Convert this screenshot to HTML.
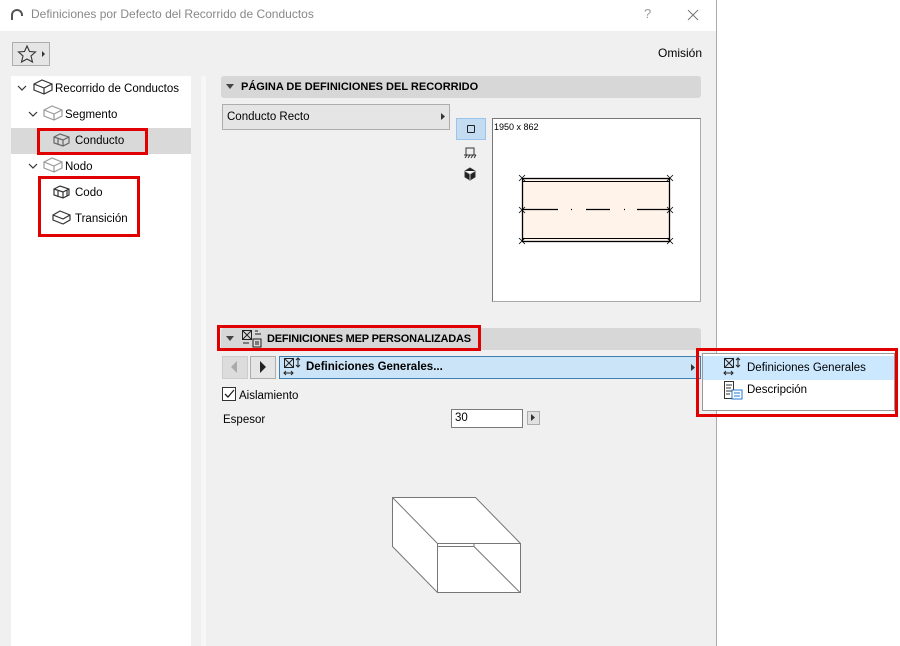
<!DOCTYPE html>
<html><head><meta charset="utf-8"><style>
*{box-sizing:border-box;margin:0;padding:0}
body{width:900px;height:646px;background:#fff;font-family:"Liberation Sans",sans-serif;font-size:11.5px;line-height:15px;color:#000;position:relative;overflow:hidden}
.a{position:absolute}
.red{position:absolute;border:3px solid #e00000}
</style></head><body>
<div class="a" style="left:0;top:0;width:717px;height:646px;background:#f0f0f0;border-right:1px solid #aaa"></div>
<div class="a" style="left:0;top:0;width:716px;height:31px;background:#fff"></div>
<svg class="a" style="left:10px;top:9px" width="14" height="12"><path d="M2 11 V6 A5 5 0 0 1 12 6 V7" fill="none" stroke="#555" stroke-width="2"/></svg>
<div class="a" style="left:31px;top:7px;color:#888;font-size:12px">Definiciones por Defecto del Recorrido de Conductos</div>
<div class="a" style="left:644px;top:6px;color:#999;font-size:13px">?</div>
<svg class="a" style="left:687px;top:9px" width="12" height="12"><path d="M1 1L11 11M11 1L1 11" stroke="#777" stroke-width="1"/></svg>
<div class="a" style="left:12px;top:42px;width:38px;height:24px;border:1px solid #adadad;background:#e5e5e5"></div>
<svg class="a" style="left:17px;top:44px" width="30" height="20"><path d="M10 2 L12.5 7.5 L18.5 8 L14 12 L15.5 18 L10 15 L4.5 18 L6 12 L1.5 8 L7.5 7.5Z" fill="none" stroke="#333" stroke-width="1.1"/><path d="M25 7 L28 10 L25 13Z" fill="#333"/></svg>
<div class="a" style="left:658px;top:46px;font-size:12px">Omisión</div>
<div class="a" style="left:11px;top:76px;width:180px;height:570px;background:#fff"></div>
<div class="a" style="left:11px;top:128px;width:180px;height:26px;background:#d9d9d9"></div>
<div class="a" style="left:201px;top:76px;width:5px;height:570px;background:#f7f7f7"></div>
<svg class="a" style="left:11px;top:76px" width="180" height="170" fill="none" stroke-width="1.2">
<path d="M7 10l4 4 4-4" stroke="#333"/>
<path d="M23 8l8-4 10 4v6l-8 4-10-4z M23 8l10 4 8-4 M33 12v6" stroke="#333"/>
<path d="M18 36l4 4 4-4" stroke="#333"/>
<path d="M33 34l8-4 10 4v6l-8 4-10-4z M33 34l10 4 8-4 M43 38v6" stroke="#999"/>
<path d="M43 61l6-3 9 3v6l-6 3-9-3z M43 61l9 3 6-3 M52 64v6 M47 63v5" stroke="#666"/>
<path d="M18 88l4 4 4-4" stroke="#333"/>
<path d="M33 86l8-4 10 4v6l-8 4-10-4z M33 86l10 4 8-4 M43 90v6" stroke="#999"/>
<path d="M43 113l6-3 9 3v6l-6 3-9-3z M43 113l9 3 6-3 M47 115v6 M52 116v6 M56 114v6" stroke="#333"/>
<path d="M42 139l7-4 10 4v5l-7 4-10-4z M42 139l10 4 7-4" stroke="#333"/>
</svg>
<div class="a" style="left:55px;top:82px">Recorrido de Conductos</div>
<div class="a" style="left:65px;top:108px">Segmento</div>
<div class="a" style="left:75px;top:134px">Conducto</div>
<div class="a" style="left:65px;top:160px">Nodo</div>
<div class="a" style="left:75px;top:186px">Codo</div>
<div class="a" style="left:75px;top:212px">Transición</div>
<div class="red" style="left:37px;top:128px;width:111px;height:27px"></div>
<div class="red" style="left:38px;top:176px;width:102px;height:61px"></div>
<div class="a" style="left:221px;top:76px;width:480px;height:22px;background:#d7d7d7;border-radius:3px"></div>
<svg class="a" style="left:226px;top:84px" width="8" height="6"><path d="M0 0h8l-4 5z" fill="#444"/></svg>
<div class="a" style="left:241px;top:80px;font-weight:bold;font-size:11px">PÁGINA DE DEFINICIONES DEL RECORRIDO</div>
<div class="a" style="left:222px;top:104px;width:228px;height:26px;border:1px solid #adadad;background:#e5e5e5"></div>
<div class="a" style="left:227px;top:110px">Conducto Recto</div>
<svg class="a" style="left:441px;top:113px" width="5" height="7"><path d="M0 0l4 3.5-4 3.5z" fill="#333"/></svg>
<div class="a" style="left:456px;top:118px;width:30px;height:22px;background:#c3dcf2;border:1px solid #9cc4ea"></div>
<div class="a" style="left:467px;top:125px;width:8px;height:8px;border:1.2px solid #222;border-radius:1px"></div>
<svg class="a" style="left:463px;top:145px" width="14" height="40" fill="none" stroke="#333"><path d="M3 10V3h8v7 M1 10h12 M2 13l2-3 M5 13l2-3 M8 13l2-3 M11 13l2-3"/><path d="M7 23l5 3v6l-5 3-5-3v-6z" fill="#222"/><path d="M2 26l5 3 5-3 M7 29v6" stroke="#ccc" fill="#fff"/></svg>
<div class="a" style="left:492px;top:118px;width:209px;height:184px;background:#fff;border:1px solid #aaa;border-top-color:#777;border-left-color:#777"></div>
<div class="a" style="left:494px;top:120px;font-size:9px">1950 x 862</div>
<svg class="a" style="left:515px;top:172px" width="165" height="77" fill="none" stroke="#000">
<rect x="7.5" y="6.5" width="147" height="63" fill="#fff3ea" stroke-width="1.3"/>
<path d="M7 9.5h148 M7 66.5h148" stroke-width="1"/>
<path d="M8 37.5h35 M56 37.5h1 M71 37.5h24 M109 37.5h1 M122 37.5h33" stroke-width="1.2"/>
<path d="M4 3l6 6M10 3l-6 6 M152 3l6 6M158 3l-6 6 M4 35l6 6M10 35l-6 6 M152 35l6 6M158 35l-6 6 M4 66l6 6M10 66l-6 6 M152 66l6 6M158 66l-6 6" stroke-width="0.8"/>
</svg>
<div class="a" style="left:221px;top:328px;width:480px;height:22px;background:#d7d7d7;border-radius:3px"></div>
<svg class="a" style="left:226px;top:336px" width="8" height="6"><path d="M0 0h8l-4 5z" fill="#444"/></svg>
<svg class="a" style="left:241px;top:329px" width="22" height="20" fill="none" stroke="#222"><rect x="1.5" y="1.5" width="9" height="9"/><path d="M2 2l8 8M10 2l-8 8 M14 2h3M14 5h6 M2 14h6 M12 10h8v8h-8z M14 13h4M14 15h4"/></svg>
<div class="a" style="left:267px;top:332px;font-weight:bold;font-size:11px;letter-spacing:-0.2px">DEFINICIONES MEP PERSONALIZADAS</div>
<div class="red" style="left:217px;top:325px;width:264px;height:26px"></div>
<div class="a" style="left:222px;top:356px;width:26px;height:23px;background:#dcdcdc;border:1px solid #ccc"></div>
<svg class="a" style="left:231px;top:361px" width="7" height="12"><path d="M6 0v12L0 6z" fill="#aaa"/></svg>
<div class="a" style="left:250px;top:356px;width:26px;height:23px;background:#e5e5e5;border:1px solid #adadad"></div>
<svg class="a" style="left:260px;top:361px" width="7" height="12"><path d="M0 0v12L6 6z" fill="#222"/></svg>
<div class="a" style="left:279px;top:356px;width:422px;height:23px;background:#cce4f7;border:1px solid #3c7fb1"></div>
<svg class="a" style="left:283px;top:357px" width="20" height="21" fill="none" stroke="#222"><rect x="1.5" y="1.5" width="9" height="9"/><path d="M2 2l8 8M10 2l-8 8 M15 1v9 M13 3l2-2 2 2 M13 8l2 2 2-2 M1 16h9 M3 14l-2 2 2 2 M8 14l2 2-2 2"/></svg>
<div class="a" style="left:306px;top:360px;font-weight:bold">Definiciones Generales...</div>
<svg class="a" style="left:691px;top:364px" width="5" height="7"><path d="M0 0l4 3.5-4 3.5z" fill="#333"/></svg>
<div class="a" style="left:222px;top:387px;width:14px;height:14px;border:1px solid #333;background:#fff"></div>
<svg class="a" style="left:223px;top:388px" width="12" height="12"><path d="M2 6l3 3 6-7" fill="none" stroke="#222" stroke-width="1.3"/></svg>
<div class="a" style="left:239px;top:389px">Aislamiento</div>
<div class="a" style="left:223px;top:413px">Espesor</div>
<div class="a" style="left:451px;top:409px;width:72px;height:19px;background:#fff;border:1px solid #7a7a7a"></div>
<div class="a" style="left:455px;top:411px">30</div>
<div class="a" style="left:527px;top:411px;width:13px;height:14px;background:#e1e1e1;border:1px solid #adadad"></div>
<svg class="a" style="left:531px;top:414px" width="5" height="7"><path d="M0 0l4 3.5-4 3.5z" fill="#333"/></svg>
<svg class="a" style="left:370px;top:480px" width="160" height="120" fill="#fff" stroke="#777" stroke-width="1">
<path d="M22.5 17.5h83l45 46v49h-83l-45-46z"/>
<path d="M22.5 17.5l45 46h83 M67.5 63.5v49 M67.5 66.5h36 M104 63.5v3l46 46"/>
</svg>
<div class="a" style="left:702px;top:353px;width:193px;height:58px;background:#fff;border:1px solid #999"></div>
<div class="a" style="left:703px;top:356px;width:191px;height:24px;background:#cce8ff"></div>
<svg class="a" style="left:723px;top:357px" width="20" height="21" fill="none" stroke="#222"><rect x="1.5" y="1.5" width="9" height="9"/><path d="M2 2l8 8M10 2l-8 8 M15 1v9 M13 3l2-2 2 2 M13 8l2 2 2-2 M1 16h9 M3 14l-2 2 2 2 M8 14l2 2-2 2"/></svg>
<div class="a" style="left:747px;top:361px">Definiciones Generales</div>
<svg class="a" style="left:723px;top:380px" width="20" height="21" fill="none"><path d="M1.5 1.5h9v17h-9z M3 5h6M3 8h5M3 11h6M3 14h4" stroke="#333"/><rect x="9" y="10" width="10" height="9" fill="#fff" stroke="#1f78d1"/><path d="M11 13h6M11 16h6" stroke="#1f78d1"/></svg>
<div class="a" style="left:747px;top:383px">Descripción</div>
<div class="red" style="left:696px;top:348px;width:202px;height:69px"></div>
</body></html>
